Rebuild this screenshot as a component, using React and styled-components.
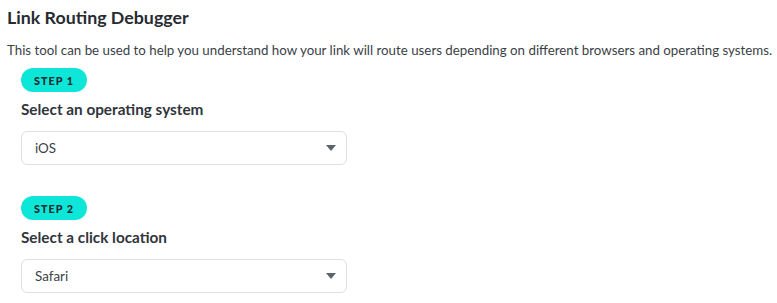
import React from "react";
import styled, { createGlobalStyle } from "styled-components";

const GlobalStyle = createGlobalStyle`
  body {
    margin: 0;
    background: #ffffff;
    font-family: "Lato", "Open Sans", sans-serif;
    color: #2a2f36;
  }
`;

const Page = styled.div`
  padding: 4px 7px 0;
`;

const Title = styled.h2`
  margin: 0;
  font-size: 17.8px;
  line-height: 26px;
  font-weight: 700;
  color: #262b32;
`;

const Intro = styled.p`
  margin: 10px 0 0;
  font-size: 13.3px;
  line-height: 20px;
  color: #3a3f46;
  white-space: nowrap;
`;

const Steps = styled.div`
  display: flex;
  flex-direction: column;
  gap: 31px;
  padding: 8px 0 0 14px;
`;

const Step = styled.section`
  display: flex;
  flex-direction: column;
  align-items: flex-start;
`;

const Pill = styled.span`
  display: inline-flex;
  align-items: center;
  justify-content: center;
  width: 66px;
  height: 24px;
  border-radius: 12px;
  background: #0ee6d8;
  color: #1f2a30;
  font-size: 10.8px;
  font-weight: 900;
  letter-spacing: 1px;
`;

const Label = styled.label`
  margin-top: 6px;
  font-size: 15.3px;
  line-height: 22px;
  font-weight: 700;
  color: #30353c;
`;

const SelectBox = styled.div`
  margin-top: 11px;
  width: 326px;
  height: 34px;
  box-sizing: border-box;
  border: 1px solid #dde1e6;
  border-radius: 6px;
  display: flex;
  align-items: center;
  justify-content: space-between;
  padding: 0 10px 0 13px;
  font-size: 13.4px;
  color: #3a3f46;
`;

const Caret = () => (
  <svg width="10" height="6" viewBox="0 0 10 6">
    <path d="M0 0h10L5 6z" fill="#5f646b" />
  </svg>
);

const steps = [
  { n: 1, label: "Select an operating system", value: "iOS" },
  { n: 2, label: "Select a click location", value: "Safari" },
];

export default function App() {
  return (
    <Page>
      <GlobalStyle />
      <Title>Link Routing Debugger</Title>
      <Intro>
        This tool can be used to help you understand how your link will route users depending on different browsers and operating systems.
      </Intro>
      <Steps>
        {steps.map((s) => (
          <Step key={s.n}>
            <Pill>STEP {s.n}</Pill>
            <Label>{s.label}</Label>
            <SelectBox>
              <span>{s.value}</span>
              <Caret />
            </SelectBox>
          </Step>
        ))}
      </Steps>
    </Page>
  );
}
